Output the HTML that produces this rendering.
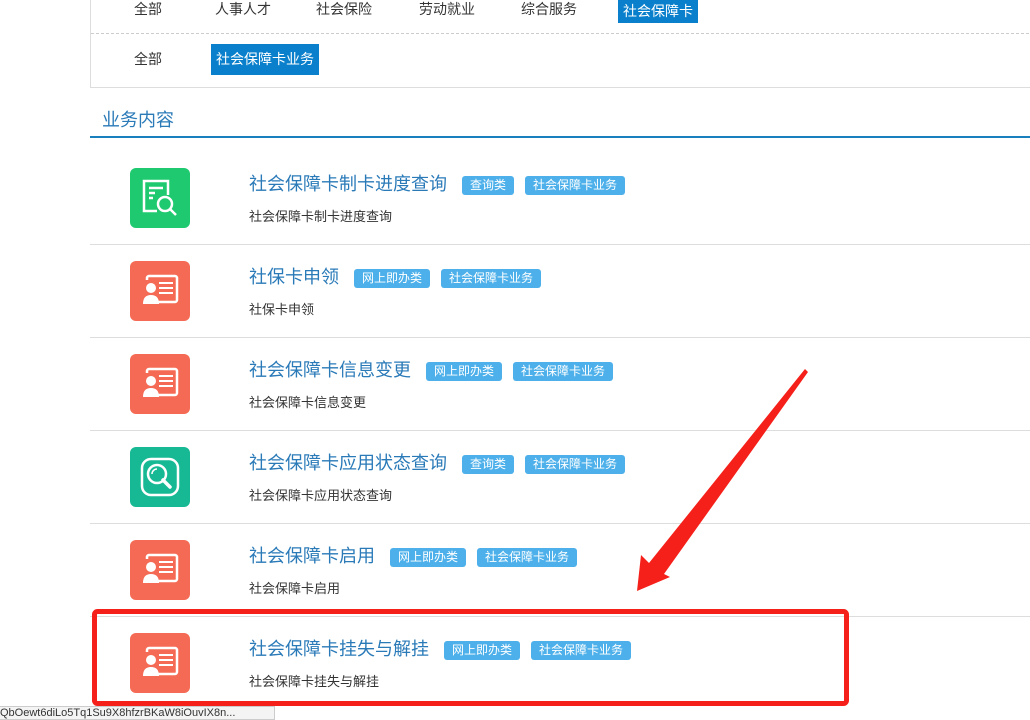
<!DOCTYPE html>
<html><head><meta charset="utf-8"><style>
*{margin:0;padding:0;box-sizing:border-box}
body{width:1030px;height:718px;overflow:hidden;background:#fff;font-family:"Liberation Sans","Noto Sans CJK SC",sans-serif;position:relative}
.box{position:absolute;left:90px;top:-2px;width:960px;height:90px;border:1px solid #ddd;border-top:none}
.r1{position:absolute;left:0;top:0;height:36px;width:100%;border-bottom:1px dashed #ccc}
.r2{position:absolute;left:0;top:36px;height:52px;width:100%}
.it{position:absolute;font-size:14px;color:#333;line-height:20px}
.on{background:#0a80cc;color:#fff;padding:0 5px}
.sec{position:absolute;left:90px;top:104px;width:940px;height:34px;border-bottom:2px solid #1a7fbd}
.sec span{position:absolute;left:12px;top:2px;font-size:18px;color:#2a7ab8}
.row{position:absolute;left:90px;width:940px;height:93px;border-bottom:1px solid #ddd}
.ic{position:absolute;left:40px;top:16px;width:60px;height:60px;border-radius:6px}
.t{position:absolute;left:159px;top:20px;font-size:18px;color:#2a7ab8;white-space:nowrap;line-height:24px}
.tag{display:inline-block;vertical-align:1px;margin-left:11px;background:#4db0ea;color:#fff;font-size:12px;line-height:19px;padding:0 8px;border-radius:3px}
.tag.f{margin-left:15px}
.d{position:absolute;left:159px;top:54px;font-size:13px;color:#333}
</style></head><body>
<div class="box">
<div class="r1">
<span class="it" style="left:43px;top:1px">全部</span>
<span class="it" style="left:124px;top:1px">人事人才</span>
<span class="it" style="left:225px;top:1px">社会保险</span>
<span class="it" style="left:328px;top:1px">劳动就业</span>
<span class="it" style="left:430px;top:1px">综合服务</span>
<span class="it on" style="left:527px;top:-2px;height:27px;line-height:30px">社会保障卡</span>
</div>
<div class="r2">
<span class="it" style="left:43px;top:15px">全部</span>
<span class="it on" style="left:120px;top:10px;height:31px;line-height:30px">社会保障卡业务</span>
</div>
</div>
<div class="sec"><span>业务内容</span></div>

<svg width="0" height="0" style="position:absolute"><defs>
<g id="card"><rect x="17" y="15" width="30" height="26" rx="2" fill="none" stroke="#fff" stroke-width="2.5"/><rect x="10" y="19" width="15" height="24" fill="#f56a55"/><line x1="29" y1="22" x2="43" y2="22" stroke="#fff" stroke-width="2"/><line x1="29" y1="27" x2="43" y2="27" stroke="#fff" stroke-width="2"/><line x1="29" y1="32" x2="43" y2="32" stroke="#fff" stroke-width="2"/><circle cx="21" cy="27" r="5" fill="#fff"/><path d="M13 43 q0-9 8-9 q8 0 8 9z" fill="#fff"/></g>
</defs></svg>

<div class="row" style="top:152px"><div class="ic" style="background:#1ec96f"><svg width="60" height="60"><path d="M27 43H14V13h24v14" fill="none" stroke="#fff" stroke-width="2.5"/><path d="M19 20h14M19 25h6M19 30h4" stroke="#fff" stroke-width="2.5"/><circle cx="35" cy="36" r="7" fill="none" stroke="#fff" stroke-width="2.5"/><path d="M40 41l6 6" stroke="#fff" stroke-width="2.5"/></svg></div><div class="t">社会保障卡制卡进度查询<span class="tag f">查询类</span><span class="tag">社会保障卡业务</span></div><div class="d">社会保障卡制卡进度查询</div></div>

<div class="row" style="top:245px"><div class="ic" style="background:#f56a55"><svg width="60" height="60"><use href="#card"/></svg></div><div class="t">社保卡申领<span class="tag f">网上即办类</span><span class="tag">社会保障卡业务</span></div><div class="d">社保卡申领</div></div>

<div class="row" style="top:338px"><div class="ic" style="background:#f56a55"><svg width="60" height="60"><use href="#card"/></svg></div><div class="t">社会保障卡信息变更<span class="tag f">网上即办类</span><span class="tag">社会保障卡业务</span></div><div class="d">社会保障卡信息变更</div></div>

<div class="row" style="top:431px"><div class="ic" style="background:#17b994"><svg width="60" height="60"><rect x="12" y="12" width="36" height="36" rx="9" fill="none" stroke="#fff" stroke-width="2.5"/><circle cx="27" cy="27" r="9" fill="none" stroke="#fff" stroke-width="2.5"/><path d="M22 27a5 5 0 0 1 5-5" fill="none" stroke="#fff" stroke-width="1.5"/><path d="M33 33l7 7" stroke="#fff" stroke-width="3.5" stroke-linecap="round"/></svg></div><div class="t">社会保障卡应用状态查询<span class="tag f">查询类</span><span class="tag">社会保障卡业务</span></div><div class="d">社会保障卡应用状态查询</div></div>

<div class="row" style="top:524px"><div class="ic" style="background:#f56a55"><svg width="60" height="60"><use href="#card"/></svg></div><div class="t">社会保障卡启用<span class="tag f">网上即办类</span><span class="tag">社会保障卡业务</span></div><div class="d">社会保障卡启用</div></div>

<div class="row" style="top:617px;border:none"><div class="ic" style="background:#f56a55"><svg width="60" height="60"><use href="#card"/></svg></div><div class="t">社会保障卡挂失与解挂<span class="tag f">网上即办类</span><span class="tag">社会保障卡业务</span></div><div class="d">社会保障卡挂失与解挂</div></div>

<svg style="position:absolute;left:0;top:0" width="1030" height="718">
<polygon points="637,591 641,555 649,563 805,369 808,372 664,574 670,577" fill="#f5201a"/>
<rect x="94.5" y="611.5" width="752" height="92" rx="3" fill="none" stroke="#f5201a" stroke-width="5"/>
</svg>
<div style="position:absolute;left:-1px;top:706px;width:276px;height:14px;background:#f4f4f4;border:1px solid #ccc;font-size:11px;line-height:12px;color:#333;white-space:nowrap;overflow:hidden">QbOewt6diLo5Tq1Su9X8hfzrBKaW8iOuvIX8n...</div>
</body></html>
